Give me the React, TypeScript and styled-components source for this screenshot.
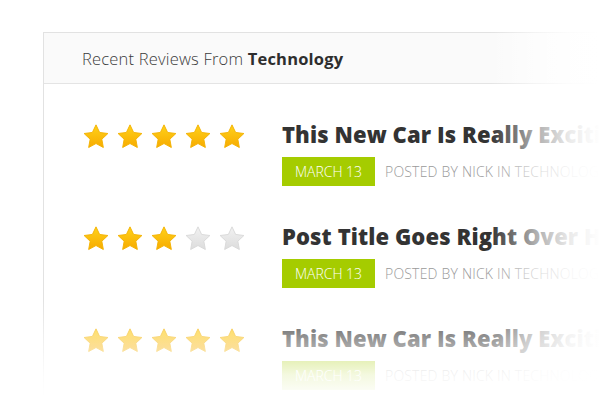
import styled, { createGlobalStyle } from 'styled-components'

const GlobalStyle = createGlobalStyle`
  html, body { margin: 0; padding: 0; background: #fff; }
  body { font-family: "Open Sans", "Noto Sans", sans-serif; }
`

const Page = styled.div`
  width: 600px;
  height: 400px;
  overflow: hidden;
  position: relative;
  padding: 32px 0 0 43px;
  box-sizing: border-box;
`

const Card = styled.div`
  width: 620px;
  border: 1px solid #e2e2e2;
  background: #fff;
`

const Header = styled.div`
  height: 50px;
  display: flex;
  align-items: center;
  padding-left: 38px;
  background: #fafafa;
  border-bottom: 1px solid #e4e4e4;
  font-size: 16.5px;
  color: #3a3a3a;
  font-weight: 300;
  letter-spacing: 0.2px;
  b { font-weight: 700; color: #2e2e2e; }
`

const List = styled.div`
  display: flex;
  flex-direction: column;
  gap: 35px;
  padding: 35px 0 40px 38px;
`

const Row = styled.div`
  display: flex;
  align-items: flex-start;
`

const Stars = styled.div`
  display: flex;
  gap: 6px;
  width: 200px;
  padding-top: 4px;
`

const Body = styled.div`
  display: flex;
  flex-direction: column;
  gap: 8px;
  white-space: nowrap;
`

const Title = styled.div`
  font-size: 22px;
  font-weight: 800;
  color: #333;
  letter-spacing: 0.1px;
  line-height: 30px;
`

const Meta = styled.div`
  display: flex;
  align-items: center;
  gap: 10px;
`

const DateBadge = styled.div`
  background: #a5cc00;
  color: #fff;
  font-size: 14px;
  font-weight: 300;
  width: 93px;
  height: 29px;
  display: flex;
  align-items: center;
  justify-content: center;
`

const Posted = styled.div`
  font-size: 14px;
  font-weight: 300;
  color: #9a9a9a;
  letter-spacing: 0.2px;
`

const FadeRight = styled.div`
  position: absolute;
  inset: 0;
  pointer-events: none;
  background: linear-gradient(to right, rgba(255,255,255,0) 0px, rgba(255,255,255,0) 490px, rgba(255,255,255,0.6) 535px, rgba(255,255,255,0.9) 570px, #fff 600px);
`

const FadeBottom = styled.div`
  position: absolute;
  inset: 0;
  pointer-events: none;
  background: linear-gradient(to bottom, rgba(255,255,255,0) 0px, rgba(255,255,255,0) 300px, rgba(255,255,255,0.5) 340px, rgba(255,255,255,0.88) 375px, #fff 398px);
`

const Star = ({ on, id }: { on: boolean; id: string }) => (
  <svg width="28" height="28" viewBox="0 0 24 24">
    <defs>
      <linearGradient id={id} x1="0" y1="0" x2="0" y2="1">
        {on ? (
          <>
            <stop offset="0" stopColor="#ffd21a" />
            <stop offset="1" stopColor="#f7ab00" />
          </>
        ) : (
          <>
            <stop offset="0" stopColor="#f2f2f2" />
            <stop offset="1" stopColor="#dcdcdc" />
          </>
        )}
      </linearGradient>
    </defs>
    <path
      d="M12 1.6l3.1 6.5 7.1.9-5.2 4.9 1.3 7.1L12 17.6 5.7 21l1.3-7.1L1.8 9l7.1-.9z"
      fill={`url(#${id})`}
      stroke={on ? '#f3b200' : '#d8d8d8'}
      strokeWidth="0.8"
      strokeLinejoin="round"
    />
  </svg>
)

const reviews = [
  { rating: 5, title: 'This New Car Is Really Exciting' },
  { rating: 3, title: 'Post Title Goes Right Over Here' },
  { rating: 5, title: 'This New Car Is Really Exciting' },
]

export default function App() {
  return (
    <>
      <GlobalStyle />
      <Page>
        <Card>
          <Header>
            Recent Reviews From&nbsp;<b>Technology</b>
          </Header>
          <List>
            {reviews.map((r, i) => (
              <Row key={i}>
                <Stars>
                  {[0, 1, 2, 3, 4].map(s => (
                    <Star key={s} on={s < r.rating} id={`g${i}${s}`} />
                  ))}
                </Stars>
                <Body>
                  <Title>{r.title}</Title>
                  <Meta>
                    <DateBadge>MARCH 13</DateBadge>
                    <Posted>POSTED BY NICK IN TECHNOLOGY</Posted>
                  </Meta>
                </Body>
              </Row>
            ))}
          </List>
        </Card>
        <FadeRight />
        <FadeBottom />
      </Page>
    </>
  )
}
